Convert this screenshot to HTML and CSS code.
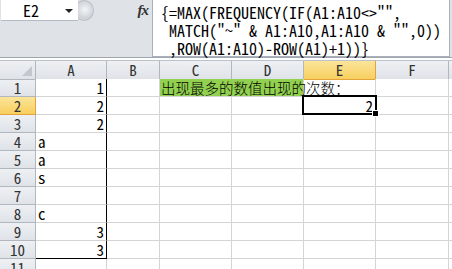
FILE: index.html
```html
<!DOCTYPE html>
<html lang="zh-CN">
<head>
  <meta charset="UTF-8">
  <title>Excel FREQUENCY</title>
  <link rel="stylesheet" href="styles.css">
</head>
<body>
  <div class="fbar">
    <div class="fleft">
      <div class="namebox">E2<span class="drop"></span></div>
      <div class="knob"></div>
      <div class="fx">fx</div>
    </div>
    <div class="ftext">{=MAX(FREQUENCY(IF(A1:A10&lt;&gt;"",
 MATCH("~" &amp; A1:A10,A1:A10 &amp; "",0))
 ,ROW(A1:A10)-ROW(A1)+1))}</div>
  </div>
  <div class="gap"></div>

  <div class="sheet">
    <div class="hd corner"><span class="tri"></span></div>
    <div class="hd">A</div>
    <div class="hd">B</div>
    <div class="hd">C</div>
    <div class="hd">D</div>
    <div class="hd on">E</div>
    <div class="hd">F</div>
    <div class="hd last"></div>

    <div class="rh">1</div>
    <div class="c a num">1</div>
    <div class="c"></div>
    <div class="c green">出现最多的数值出现的次数：</div>
    <div class="c clear"></div>
    <div class="c"></div>
    <div class="c last"></div>

    <div class="rh on">2</div>
    <div class="c a num">2</div>
    <div class="c"></div>
    <div class="c"></div>
    <div class="c"></div>
    <div class="c num sel">2</div>
    <div class="c"></div>
    <div class="c last"></div>

    <div class="rh">3</div>
    <div class="c a num">2</div>
    <div class="c"></div><div class="c"></div><div class="c"></div><div class="c"></div><div class="c"></div><div class="c last"></div>

    <div class="rh">4</div>
    <div class="c a">a</div>
    <div class="c"></div><div class="c"></div><div class="c"></div><div class="c"></div><div class="c"></div><div class="c last"></div>

    <div class="rh">5</div>
    <div class="c a">a</div>
    <div class="c"></div><div class="c"></div><div class="c"></div><div class="c"></div><div class="c"></div><div class="c last"></div>

    <div class="rh">6</div>
    <div class="c a">s</div>
    <div class="c"></div><div class="c"></div><div class="c"></div><div class="c"></div><div class="c"></div><div class="c last"></div>

    <div class="rh">7</div>
    <div class="c a"></div>
    <div class="c"></div><div class="c"></div><div class="c"></div><div class="c"></div><div class="c"></div><div class="c last"></div>

    <div class="rh">8</div>
    <div class="c a">c</div>
    <div class="c"></div><div class="c"></div><div class="c"></div><div class="c"></div><div class="c"></div><div class="c last"></div>

    <div class="rh">9</div>
    <div class="c a num">3</div>
    <div class="c"></div><div class="c"></div><div class="c"></div><div class="c"></div><div class="c"></div><div class="c last"></div>

    <div class="rh">10</div>
    <div class="c a num bottom">3</div>
    <div class="c"></div><div class="c"></div><div class="c"></div><div class="c"></div><div class="c"></div><div class="c last"></div>

    <div class="rh">11</div>
    <div class="c"></div><div class="c"></div><div class="c"></div><div class="c"></div><div class="c"></div><div class="c"></div><div class="c last"></div>
  </div>
</body>
</html>
```

FILE: styles.css
```css
body { margin: 0; width: 452px; height: 269px; overflow: hidden; background: #fff; font-family: "Noto Sans Mono CJK SC", "DejaVu Sans Mono", monospace; font-weight: 300; color: #000; }

/* formula bar */
.fbar { display: flex; height: 57px; background: #dfe3e8; border-bottom: 1px solid #9ea6b0; }
.fleft { width: 152px; height: 21px; display: flex; align-items: center; }
.namebox { position: relative; width: 77px; height: 21px; margin-left: 1px; background: #fff; border-bottom: 1px solid #b3bac3; box-sizing: border-box; font-size: 16px; line-height: 20px; padding-left: 22px; }
.drop { position: absolute; left: 64px; top: 9px; border-left: 4px solid transparent; border-right: 4px solid transparent; border-top: 4px solid #222; }
.knob { width: 18px; height: 19px; margin-left: -4px; border-radius: 50%; border: 1px solid #b9bfc7; background: radial-gradient(circle at 55% 45%, #f4f5f7 0, #cfd3d8 60%, #e5e8ec 100%); }
.fx { margin-left: auto; margin-right: 4px; font-family: "Liberation Serif", serif; font-style: italic; font-weight: bold; font-size: 15px; color: #333; letter-spacing: -1px; }
.ftext { flex: 1; margin-right: 2px; background: #fff; border: 1px solid #a9b0b9; border-top: 0; padding: 3px 0 0 8px; font-size: 16px; line-height: 18px; white-space: pre; }
.gap { height: 2px; background: #fff; border-bottom: 1px solid #bcc2ca; }

/* grid */
.sheet { display: grid; grid-template-columns: 36px 71px 53px 72px 72px 72px 73px 1fr; grid-auto-rows: 18px; }
.hd, .rh { background: linear-gradient(#eef0f3, #dfe3e8); border-right: 1px solid #b1b7bf; border-bottom: 1px solid #b1b7bf; box-sizing: border-box; text-align: center; font-size: 15px; line-height: 18px; color: #333; }
.hd { height: 19px; }
.hd.on, .rh.on { background: linear-gradient(#fbe59a, #f8cf5e); border-color: #e3a43d; }
.hd.last { border-right: 0; }
.corner { position: relative; }
.tri { position: absolute; right: 3px; bottom: 3px; border-left: 10px solid transparent; border-bottom: 10px solid #c3c8cf; }
.c { background: #fff; border-right: 1px solid #d4d4d4; border-bottom: 1px solid #d4d4d4; box-sizing: border-box; font-size: 15px; line-height: 17px; padding: 0 2px; white-space: nowrap; }
.c.last { border-right: 0; }
.num { text-align: right; }
.a { border-right: 1px solid #000; }
.bottom { border-bottom: 1px solid #000; }
.green { grid-column: span 2; background: #92d050; font-family: "Noto Sans CJK SC", sans-serif; font-size: 14.5px; line-height: 17px; padding-left: 1px; overflow: visible; }
.clear { background: transparent; }
.sel { position: relative; }
.sel::before { content: ""; position: absolute; left: -2px; top: -2px; right: -2px; bottom: -1px; border: 2px solid #000; box-shadow: inset 0 0 0 1px #fff; }
.sel::after { content: ""; position: absolute; right: -4px; bottom: -3px; width: 5px; height: 5px; background: #000; border: 1px solid #fff; }
```
